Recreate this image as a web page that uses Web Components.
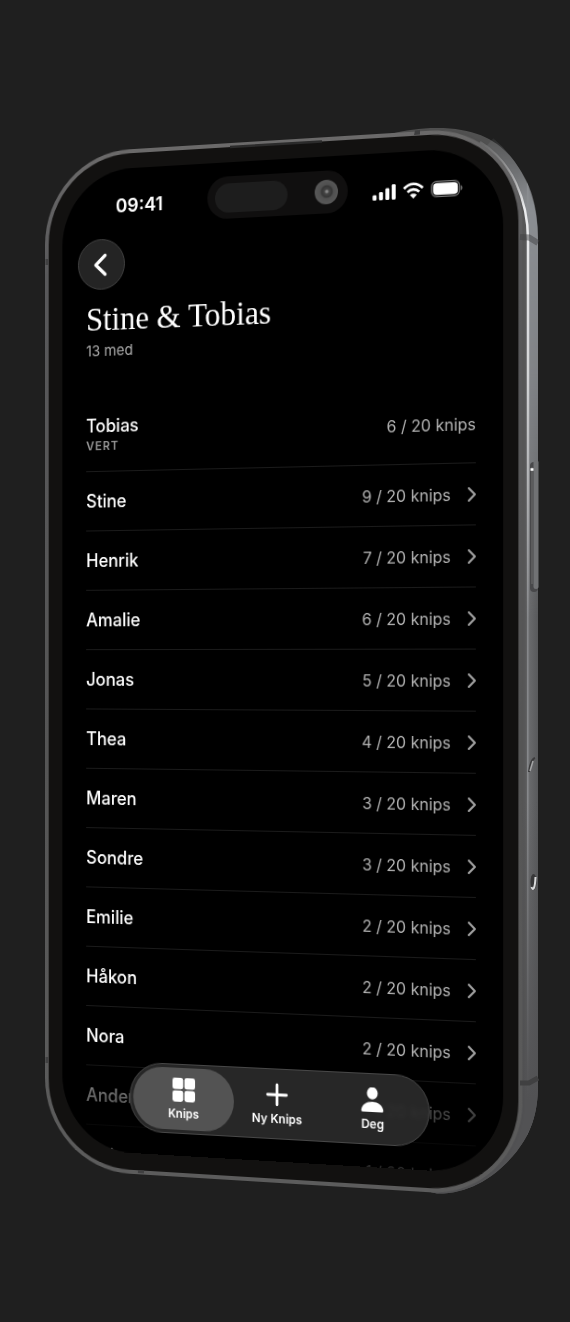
<!DOCTYPE html>
<html lang="nb">
<head>
<meta charset="utf-8">
<meta name="viewport" content="width=device-width, initial-scale=1">
<title>Knips – Stine &amp; Tobias</title>
<style>
  html { background: #1f1f1f; }
  body { margin: 0; min-height: 100vh; display: grid; place-items: center; background: #1f1f1f; color: #fff; font-family: Inter, "Liberation Sans", sans-serif; overflow: hidden; }
</style>
</head>
<body>
<phone-stage>
  <phone-device>
    <status-bar slot="status">09:41</status-bar>
    <album-header>
      <span slot="title">Stine &amp; Tobias</span>
      <span slot="meta">13 med</span>
    </album-header>
    <member-list>
      <member-row host count="6 / 20 knips">Tobias<span slot="role">VERT</span></member-row>
      <member-row count="9 / 20 knips">Stine</member-row>
      <member-row count="7 / 20 knips">Henrik</member-row>
      <member-row count="6 / 20 knips">Amalie</member-row>
      <member-row count="5 / 20 knips">Jonas</member-row>
      <member-row count="4 / 20 knips">Thea</member-row>
      <member-row count="3 / 20 knips">Maren</member-row>
      <member-row count="3 / 20 knips">Sondre</member-row>
      <member-row count="2 / 20 knips">Emilie</member-row>
      <member-row count="2 / 20 knips">Håkon</member-row>
      <member-row count="2 / 20 knips">Nora</member-row>
      <member-row count="1 / 20 knips">Anders</member-row>
      <member-row count="1 / 20 knips">Julie</member-row>
    </member-list>
    <tab-bar slot="tabs">
      <tab-item active><svg slot="icon" viewBox="0 0 24 24" width="24" height="24" fill="#fff"><rect width="11.3" height="11.3" rx="2.4"/><rect x="12.7" width="11.3" height="11.3" rx="2.4"/><rect y="12.7" width="11.3" height="11.3" rx="2.4"/><rect x="12.7" y="12.7" width="11.3" height="11.3" rx="2.4"/></svg>Knips</tab-item>
      <tab-item><svg slot="icon" viewBox="0 0 24 24" width="24" height="24" stroke="#fff" stroke-width="2.8" stroke-linecap="round"><path d="M12 2.2v19.6M2.2 12h19.6"/></svg>Ny Knips</tab-item>
      <tab-item><svg slot="icon" viewBox="0 0 24 24" width="24" height="24" fill="#fff"><ellipse cx="12" cy="5.7" rx="5.5" ry="6"/><path d="M2.3 24C1 24 .6 23.2.8 22 1.6 17.2 6 14 12 14s10.4 3.2 11.2 8c.2 1.200-.2 2-1.500 2z"/></svg>Deg</tab-item>
    </tab-bar>
  </phone-device>
</phone-stage>

<script>
  const define = (name, html, setup) => {
    const template = document.createElement('template');
    template.innerHTML = html;
    customElements.define(name, class extends HTMLElement {
      constructor() {
        super();
        this.attachShadow({ mode: 'open' }).append(template.content.cloneNode(true));
      }
      connectedCallback() { if (setup) setup(this, this.shadowRoot); }
    });
  };

  /* Metal body behind and around the tilted face */
  define('phone-stage', `
    <style>
      :host { display: grid; width: 100%; max-width: 570px; aspect-ratio: 570 / 1322; }
      svg, .face { grid-area: 1 / 1; min-width: 0; }
      svg { width: 100%; height: 100%; }
      .face { display: grid; place-items: center; padding-right: 16px; }
      .details { pointer-events: none; z-index: 1; }
    </style>
    <svg viewBox="0 0 570 1322" aria-hidden="true">
      <defs>
        <linearGradient id="side" x1="518" x2="538" gradientUnits="userSpaceOnUse">
          <stop offset="0" stop-color="#505050"/><stop offset=".42" stop-color="#5c5c5d"/><stop offset=".48" stop-color="#8a8c8f"/><stop offset=".58" stop-color="#68696b"/><stop offset="1" stop-color="#58595b"/>
        </linearGradient>
        <linearGradient id="fade" y1="130" y2="620" x1="0" x2="0" gradientUnits="userSpaceOnUse">
          <stop offset="0" stop-color="#fff" stop-opacity="0"/><stop offset=".16" stop-color="#fff"/><stop offset=".5" stop-color="#fff" stop-opacity=".75"/><stop offset="1" stop-color="#fff" stop-opacity="0"/>
        </linearGradient>
        <linearGradient id="lower" y1="800" y2="1100" x1="0" x2="0" gradientUnits="userSpaceOnUse">
          <stop offset="0" stop-color="#525254" stop-opacity="0"/><stop offset="1" stop-color="#525254"/>
        </linearGradient>
        <mask id="top" maskUnits="userSpaceOnUse" x="0" y="0" width="570" height="1322"><rect width="570" height="1322" fill="url(#fade)"/></mask>
        <path id="hull" d="M390 150V134C405 130.500 420 128 437 128C480 128 503 143 519 168 533 189 538 210 538 240V1085C538 1115 530 1134 517 1151 497 1176 470 1194 437 1193.500L400 1185Z"/>
      </defs>
      <use href="#hull" fill="url(#side)"/>
      <g mask="url(#top)" fill="none">
        <path d="M490 142C520 168 533 200 533 240V640" stroke="#8b8e92" stroke-width="10"/>
        <path d="M480 142C512 162 528 200 528 240V640" stroke="#eeeff1" stroke-width="2.500"/>
      </g>
      <use href="#hull" fill="url(#lower)"/>
    </svg>
    <div class="face"><slot></slot></div>
    <svg class="details" viewBox="0 0 570 1322" aria-hidden="true">
      <g fill="none" stroke="#404041">
        <path d="M230 147 322 141.500" stroke="#2b2b2b" stroke-width="2.500"/>
        <path d="M414 135 420 134.500V130L415 130.500Z" fill="#3d3d3e" stroke="none"/>
        <path d="M520 237 529 237.500 538 243" stroke-width="6" opacity=".5"/>
        <path d="M520 1083H529L538 1078" stroke-width="5"/>
        <path d="M45.500 262H48.500M45.500 1060H48.500" stroke-width="6"/>
        <path d="M138 1171.500 144 1172" stroke-width="3"/>
      </g>
      <rect x="530" y="462" width="8" height="130" rx="4" fill="#48484a"/>
      <rect x="533.500" y="460" width="5" height="129" rx="2.500" fill="#717274"/>
      <path d="M532 467V584" stroke="#5b5b5c" stroke-width="2"/>
      <path d="M530.500 469.500h3" stroke="#fff" stroke-width="2.500"/>
      <path d="M529 772C530 764 532 759 535 758" stroke="#3b3b3c" fill="none" stroke-width="2"/>
      <path d="M530 771 533 761" stroke="#a4a5a6" stroke-width="1.500"/>
      <ellipse cx="533.500" cy="882" rx="3" ry="8" fill="#373738"/>
      <path d="M531.500 887C533 891 535 889 535.500 877" stroke="#d9dadb" fill="none" stroke-width="2"/>
    </svg>`);

  define('phone-device', `
    <style>
      :host { display: block; box-sizing: border-box; width: 100%; max-width: 496px; aspect-ratio: 496 / 1031; padding: 4px; border-radius: 92px; background: linear-gradient(to bottom, #6b6a6a, #58585a 12%, #555 60%, #5c5c5c); box-shadow: 0 0 3px 2px rgba(31,31,31,.04); transform: perspective(2740px) rotateY(-18deg) scale(1.0113); }
      .bezel { box-sizing: border-box; height: 100%; padding: 15px 15px 17px; border-radius: 88px; background: #121110; }
      .screen { position: relative; box-sizing: border-box; height: 100%; border-radius: 76px; overflow: hidden; background: #000; }
      .island { position: absolute; top: 14px; left: 50%; transform: translateX(-50%); box-sizing: border-box; width: 146px; height: 42px; padding: 0 10px 0 8px; border-radius: 21px; background: #100f0f; display: flex; align-items: center; justify-content: space-between; }
      .sensor { width: 76px; height: 29px; border-radius: 15px; background: #1d1d1d; }
      .camera { width: 24px; height: 24px; border-radius: 50%; background: radial-gradient(circle at 52% 48%, #8a8a8a 0 4%, #444 14%, #363636 30%, #505050 40%, #565656 60%); }
      .shade { position: absolute; left: 0; right: 0; bottom: 0; height: 107px; background: linear-gradient(transparent, rgba(0,0,0,.6) 50px, rgba(0,0,0,.76)); pointer-events: none; }
      .tabs { position: absolute; left: 0; right: 0; bottom: 22px; display: grid; justify-content: center; }
    </style>
    <div class="bezel"><div class="screen">
      <slot name="status"></slot>
      <div class="island" aria-hidden="true"><div class="sensor"></div><div class="camera"></div></div>
      <slot></slot>
      <div class="shade"></div>
      <div class="tabs"><slot name="tabs"></slot></div>
    </div></div>`);

  define('status-bar', `
    <style>
      :host { display: flex; align-items: center; justify-content: space-between; padding: 26px 40px 20px 58px; font-size: 19px; font-weight: 600; line-height: 24px; }
      .icons { display: flex; align-items: center; gap: 7px; }
    </style>
    <slot></slot>
    <div class="icons" aria-hidden="true">
      <svg width="24" height="16" viewBox="0 0 24 16" fill="#fff"><rect x=".3" y="10.800" width="4" height="5.200" rx="1.300"/><rect x="6.800" y="8" width="4" height="8" rx="1.300"/><rect x="13.300" y="4.500" width="4" height="11.500" rx="1.300"/><rect x="19.700" y="1" width="4" height="15" rx="1.300"/></svg>
      <svg width="21" height="16" viewBox="0 0 21 16"><g fill="none" stroke="#fff" stroke-width="2.700"><path d="M1 6C6.500.3 14.500.3 20 6"/><path d="M4.600 9.600C8 6.200 13 6.200 16.400 9.600"/></g><path fill="#fff" d="M10.500 16 7 12.500C8.800 10.700 12.200 10.700 14 12.500Z"/></svg>
      <svg width="32" height="16" viewBox="0 0 32 16"><rect x=".7" y=".7" width="28" height="14.600" rx="5" fill="none" stroke="#777" stroke-width="1.200"/><rect x="2.300" y="2.300" width="24.800" height="11.400" rx="3.600" fill="#fff"/><path d="M30 5.500c2 .8 2 4.200 0 5z" fill="#777"/></svg>
    </div>`);

  define('album-header', `
    <style>
      :host { display: block; }
      button { display: grid; place-items: center; width: 51px; height: 51px; margin: 0 0 10px 17px; padding: 0; border: 1px solid #424242; border-radius: 50%; background: #242424; }
      h1, p { margin: 0 26px; }
      h1 { font: 400 33px/40px "Liberation Serif", serif; }
      p { margin-top: 2px; font-size: 15px; line-height: 20px; color: #acacac; }
    </style>
    <button type="button" aria-label="Tilbake"><svg width="18" height="24" viewBox="0 0 18 24" fill="none" stroke="#fff" stroke-width="3.400" stroke-linecap="round" stroke-linejoin="round"><path d="M12.500 2.500 2.500 12 12.500 21.500"/></svg></button>
    <h1><slot name="title"></slot></h1>
    <p><slot name="meta"></slot></p>`);

  define('member-list', `
    <style>:host { display: block; margin: 36px 27px 0 26px; }</style>
    <div role="list"><slot></slot></div>`);

  define('member-row', `
    <style>
      :host { display: block; border-bottom: 1px solid #1b1b1b; }
      a { display: flex; align-items: center; gap: 17px; padding: 18px 0 17px; color: inherit; text-decoration: none; }
      .name { flex: 1; font-size: 18px; line-height: 24px; font-weight: 500; }
      .role { display: block; font-size: 12px; line-height: 16px; font-weight: 600; letter-spacing: 1px; color: #989898; }
      .count { font-size: 16px; line-height: 24px; color: #b4b4b4; }
      :host(:not([host])) .role, :host([host]) svg { display: none; }
    </style>
    <a href="#"><span class="name"><slot></slot><span class="role"><slot name="role"></slot></span></span><span class="count"></span><svg width="8" height="14" viewBox="0 0 8 14" fill="none" stroke="#a4a4a4" stroke-width="2" stroke-linecap="round" stroke-linejoin="round" aria-hidden="true"><path d="M1 1 7 7 1 13"/></svg></a>`,
    (el, root) => {
      el.setAttribute('role', 'listitem');
      root.querySelector('.count').textContent = el.getAttribute('count');
    });

  define('tab-bar', `
    <style>
      :host { display: block; box-sizing: border-box; width: 312px; padding: 3px; border: 1px solid #484848; border-radius: 35px; background: rgba(44,44,44,.88); backdrop-filter: blur(2px); }
      nav { display: flex; }
      ::slotted(*) { flex: 1; }
      ::slotted(:not(:first-child)) { margin-left: -9px; }
    </style>
    <nav><slot></slot></nav>`);

  define('tab-item', `
    <style>
      :host { display: block; }
      button { display: grid; justify-items: center; gap: 4px; width: 100%; padding: 10px 0 8px; border: 0; border-radius: 31px; background: none; color: #fff; font: 600 12px/16px Inter, "Liberation Sans", sans-serif; }
      :host([active]) button { background: #535353; }
    </style>
    <button type="button"><slot name="icon"></slot><span><slot></slot></span></button>`);
</script>
</body>
</html>
